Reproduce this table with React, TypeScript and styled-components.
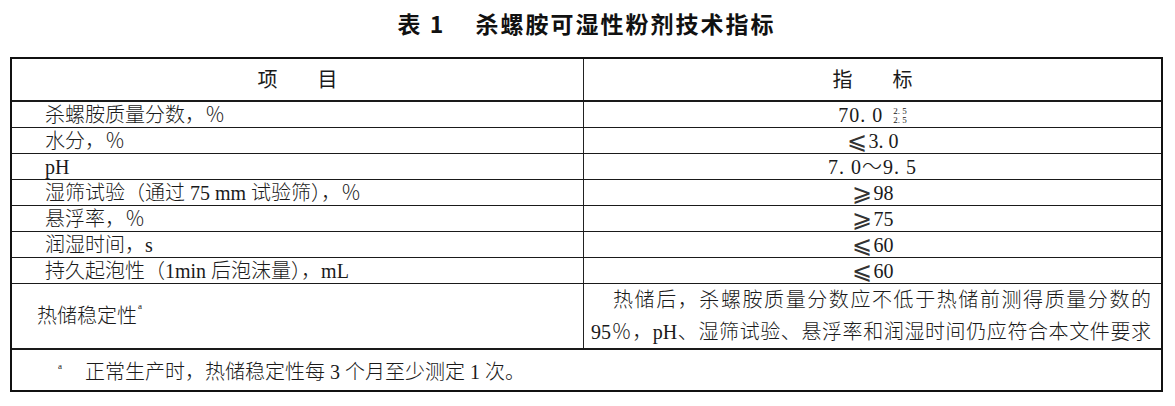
import React from "react";
import styled, { createGlobalStyle } from "styled-components";

const GlobalStyle = createGlobalStyle`
  html, body {
    margin: 0;
    padding: 0;
    background: #ffffff;
  }
  body {
    font-family: "Liberation Serif", "Noto Sans CJK SC", "DejaVu Serif", serif;
    color: #111111;
  }
`;

const Page = styled.div`
  width: 1175px;
  padding: 0 12px 0 10px;
  box-sizing: border-box;
`;

const Title = styled.h1`
  margin: 0;
  height: 57px;
  padding-bottom: 12px;
  box-sizing: border-box;
  display: flex;
  align-items: center;
  justify-content: center;
  gap: 30px;
  font-family: "Noto Sans CJK SC", sans-serif;
  font-weight: 700;
  font-size: 23px;
  letter-spacing: 2px;
  color: #111111;
`;

const Table = styled.div`
  border: 2px solid #111111;
  box-sizing: border-box;
  width: 100%;
`;

const Row = styled.div<{ $h: number; $thick?: boolean }>`
  display: grid;
  grid-template-columns: 571px 1fr;
  height: ${(p) => p.$h}px;
  box-sizing: border-box;
  border-bottom: ${(p) => (p.$thick ? 2 : 1)}px solid #1a1a1a;
`;

const Cell = styled.div<{ $align?: "left" | "center"; $pad?: number }>`
  display: flex;
  align-items: center;
  justify-content: ${(p) => (p.$align === "center" ? "center" : "flex-start")};
  padding-left: ${(p) => p.$pad ?? 0}px;
  font-size: 20px;
  line-height: 24px;
  font-weight: 300;
  white-space: nowrap;
  color: #1a1a1a;
  & + & {
    border-left: 1px solid #222222;
  }
`;

const HeaderCell = styled(Cell)`
  font-weight: 400;
`;

const TextBlock = styled.div`
  width: 100%;
  padding: 0 10px 0 7px;
  box-sizing: border-box;
  font-size: 20px;
  line-height: 32px;
`;

const JustLine = styled.div<{ $indent?: boolean }>`
  text-align: justify;
  text-align-last: justify;
  padding-left: ${(p) => (p.$indent ? 22 : 0)}px;
  white-space: normal;
`;

const Sup = styled.span`
  font-size: 9px;
  line-height: 9px;
  align-self: flex-start;
  margin-top: 18px;
  margin-left: 1px;
`;

const Tol = styled.span`
  display: inline-flex;
  flex-direction: column;
  font-size: 9px;
  line-height: 9px;
  margin-left: 10px;
  margin-top: 2px;
`;

const Rel = styled.span`
  font-family: "DejaVu Sans", sans-serif;
  font-size: 24px;
  line-height: 24px;
  font-weight: 300;
  color: #333333;
  margin: 0 2px 0 0;
`;

const Footnote = styled.div`
  height: 40px;
  display: flex;
  align-items: center;
  padding-left: 46px;
  font-size: 20px;
  font-weight: 300;
  color: #1a1a1a;
`;

const FootMark = styled.span`
  font-size: 9px;
  align-self: flex-start;
  margin-top: 11px;
  width: 27px;
`;

const Dots = styled.span`
  letter-spacing: 1px;
`;

const rows: { label: React.ReactNode; value: React.ReactNode }[] = [
  {
    label: "杀螺胺质量分数，％",
    value: (
      <>
        <Dots>70. 0</Dots>
        <Tol>
          <span>2. 5</span>
          <span>2. 5</span>
        </Tol>
      </>
    ),
  },
  { label: "水分，％", value: <><Rel>⩽</Rel>3. 0</> },
  { label: "pH", value: <Dots>7. 0～9. 5</Dots> },
  { label: "湿筛试验（通过 75 mm 试验筛），％", value: <><Rel>⩾</Rel>98</> },
  { label: "悬浮率，％", value: <><Rel>⩾</Rel>75</> },
  { label: "润湿时间，s", value: <><Rel>⩽</Rel>60</> },
  { label: "持久起泡性（1min 后泡沫量），mL", value: <><Rel>⩽</Rel>60</> },
];

export default function App() {
  return (
    <>
      <GlobalStyle />
      <Page>
        <Title>
          <span>表 1</span>
          <span>杀螺胺可湿性粉剂技术指标</span>
        </Title>
        <Table>
          <Row $h={43} $thick>
            <HeaderCell $align="center">项　　目</HeaderCell>
            <HeaderCell $align="center">指　　标</HeaderCell>
          </Row>
          {rows.map((r, i) => (
            <Row key={i} $h={26}>
              <Cell $pad={33}>{r.label}</Cell>
              <Cell $align="center">{r.value}</Cell>
            </Row>
          ))}
          <Row $h={66} $thick>
            <Cell $pad={25}>
              热储稳定性<Sup>a</Sup>
            </Cell>
            <Cell>
              <TextBlock>
                <JustLine $indent>热储后，杀螺胺质量分数应不低于热储前测得质量分数的</JustLine>
                <JustLine>95％，pH、湿筛试验、悬浮率和润湿时间仍应符合本文件要求</JustLine>
              </TextBlock>
            </Cell>
          </Row>
          <Footnote>
            <FootMark>a</FootMark>
            正常生产时，热储稳定性每 3 个月至少测定 1 次。
          </Footnote>
        </Table>
      </Page>
    </>
  );
}
